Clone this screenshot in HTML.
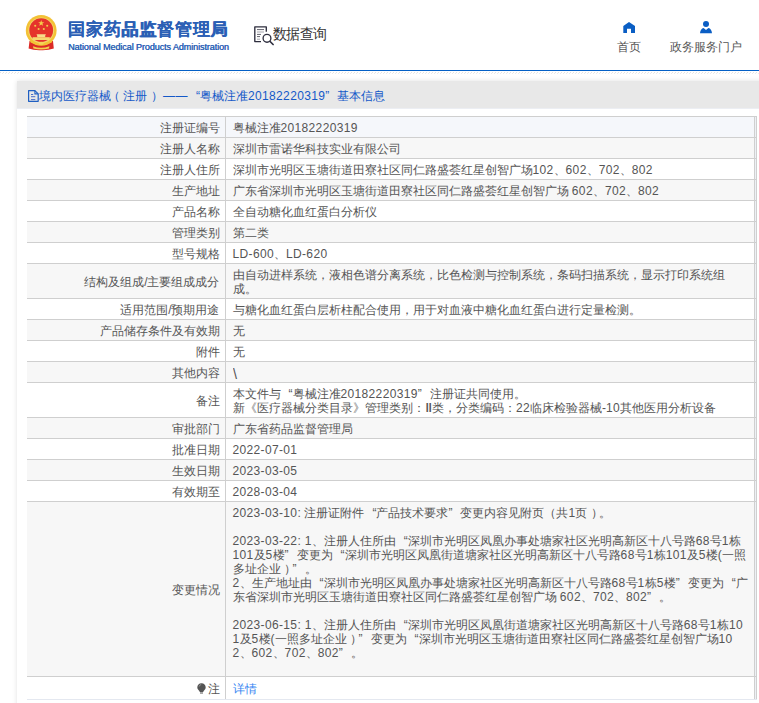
<!DOCTYPE html>
<html><head><meta charset="utf-8">
<style>
*{margin:0;padding:0;box-sizing:border-box}
html,body{width:759px;height:703px;overflow:hidden;background:#fff;font-family:"Liberation Sans",sans-serif;font-size:12px;color:#333}
.abs{position:absolute}
#emblem{left:25px;top:15px;width:34px;height:37px}
#title{left:68px;top:18px;font-size:17.4px;letter-spacing:0.8px;font-weight:bold;text-shadow:0.45px 0.2px 0 #2b5fb5;color:#2b5fb5;white-space:nowrap;line-height:22px}
#entitle{left:68px;top:41.5px;font-size:9px;letter-spacing:-0.07px;text-shadow:0.4px 0 0 #2b5fb5;color:#2b5fb5;white-space:nowrap;line-height:11px}
#qicon{left:250px;top:22px;width:28px;height:26px}
#qtext{left:273px;top:23.5px;transform:scale(1.02,1.1);transform-origin:0 0;font-size:14px;letter-spacing:-1px;color:#333;white-space:nowrap;line-height:18px}
#home{left:623px;top:21px;width:12px;height:12px}
#hometext{left:617px;top:40px;color:#555;font-size:12px;line-height:15px;white-space:nowrap}
#user{left:700px;top:20px;width:12px;height:14px}
#usertext{left:670px;top:40px;color:#555;font-size:12px;line-height:15px;white-space:nowrap}
#bline{left:0;top:70px;width:759px;height:1px;background:#0460c6}

#box{left:17px;top:81px;width:760px;height:640px;background:#fff;box-shadow:0 0 5px rgba(0,0,0,.12)}
#bar{left:17px;top:81px;width:760px;height:27px;background:#e8e8e8;border-bottom:1px solid #eceef3;box-sizing:content-box}
#h3{margin:0 0 0 4px;letter-spacing:0.5px}
#bartext{left:28px;top:88.5px;padding-left:11px;color:#1459c8;font-size:12px;line-height:15px;white-space:nowrap}
table{position:absolute;left:27px;top:116px;border-collapse:collapse;table-layout:fixed}
td{border-bottom:1px solid #cfcfcf;padding:4px 6px 2px;line-height:14px;vertical-align:middle;white-space:nowrap;color:#555}
td.l{width:198px;text-align:right;border-right:1px solid #cfcfcf;padding-right:5px}
td.r{width:529px;border-right:1px solid #cfcfcf;padding-left:7px}
td.g{width:2px;padding:0;border-right:1px solid #cfcfcf;background:#eef0f5}
tr:first-child td{border-top:1px solid #cfcfcf}
tr.w td.l, tr.w td.r{background:#fff}
tr.k td.l, tr.k td.r{background:#f7f7f7}
tr.b td.l, tr.b td.r{background:#f5f7fb}
tr.h1 td{height:21px}
b.n{font-weight:normal;letter-spacing:0.35px}
i.pr{font-style:normal;position:relative;left:3.5px}
i.rn{font-style:normal;display:inline-block;width:7.5px;text-align:center;transform:scaleX(1.25)}
i.pl{font-style:normal;position:relative;left:-3.5px}
i.ql,i.qr{font-style:normal;display:inline-block;width:12px}
i.ql{text-align:right}
i.qr{text-align:left}
tr.last td{border-bottom-color:#e4e8f0}
</style></head><body>
<div class="abs" id="emblem">
<svg width="34" height="37" viewBox="0 0 34 37">
<path d="M4.5 26 L3.6 33.5 Q9 35.5 16 35.2 Q23 35.5 28.8 33.5 L28 26 Z" fill="#dc2a26"/>
<circle cx="16.2" cy="15.4" r="15.4" fill="#f3c236"/>
<circle cx="16.2" cy="15.4" r="12.9" fill="#f2d66a"/>
<circle cx="16.2" cy="15.2" r="11.9" fill="#e5332b"/>
<path d="M16.2 5l0.75 2.2h2.3l-1.85 1.4 0.7 2.2-1.9-1.35-1.9 1.35 0.7-2.2-1.85-1.4h2.3z" fill="#f6d04a"/>
<circle cx="10.2" cy="10.7" r="1.05" fill="#f0cc4a"/><circle cx="22.2" cy="10.7" r="1.05" fill="#f0cc4a"/>
<circle cx="13.6" cy="14" r="1.05" fill="#f0cc4a"/><circle cx="18.8" cy="14" r="1.05" fill="#f0cc4a"/>
<path d="M11.5 19.2h9.4l-0.6 1.2h-8.2z M12.2 20.4h8v1.8h-8z" fill="#f7dc8a"/>
<path d="M7.6 22.2h17.2v2.8H7.6z" fill="#f6d670"/>
<path d="M5 25.4 Q16 31 27.4 25.4 L26.8 27.6 Q16 32.6 5.6 27.6Z" fill="#f3c236"/>
<path d="M13.5 27.6 Q16 25.8 18.9 27.6 L18.3 29.3 Q16 30.3 14.1 29.3Z" fill="#f4d45a"/>
<path d="M8 31.2 Q16 34.2 24.4 31.2 L24 33.4 Q16 35.6 8.4 33.4Z" fill="#f2d050"/>
</svg>
</div>
<div class="abs" id="title">国家药品监督管理局</div>
<div class="abs" id="entitle">National Medical Products Administration</div>
<div class="abs" id="qicon">
<svg width="28" height="26" viewBox="0 0 28 26"><path d="M11 19.6H4.8V4.9H16.3V9.8" fill="none" stroke="#2e2e3e" stroke-width="1.35" stroke-linejoin="round"/><path d="M7 7.6h7M7 12.4h4M7 14.6h3" stroke="#3a3a48" stroke-width="0.8"/><path d="M7 10h7M7 17.2h3" stroke="#9a9aa4" stroke-width="0.9"/><circle cx="17" cy="16.3" r="3.9" fill="none" stroke="#2e2e3e" stroke-width="1.35"/><path d="M20.1 19.5l3 3" stroke="#2e2e3e" stroke-width="1.7" stroke-linecap="round"/></svg>
</div>
<div class="abs" id="qtext">数据查询</div>
<div class="abs" id="home"><svg width="12" height="12" viewBox="0 0 12 12"><path d="M6 0.9L0.3 4.9V11.9H4V7.8H8V11.9H12V4.9z" fill="#0a5ec4"/></svg></div>
<div class="abs" id="hometext">首页</div>
<div class="abs" id="user"><svg width="12" height="14" viewBox="0 0 12 14"><circle cx="6" cy="4.1" r="3" fill="#0a5ec4"/><path d="M0 13.3Q0.4 8.6 3.6 7.9L6 9.9L8.4 7.9Q11.6 8.6 12 13.3z" fill="#0a5ec4"/></svg></div>
<div class="abs" id="usertext">政务服务门户</div>
<div class="abs" id="bline"></div>
<svg class="abs" id="dots" width="759" height="3" style="left:0;top:72px"><defs><pattern id="dp" width="3" height="2" patternUnits="userSpaceOnUse"><rect x="0" y="0" width="1" height="1" fill="#e3e3e3"/><rect x="2" y="1" width="1" height="1" fill="#ebebeb"/></pattern></defs><rect width="759" height="2" fill="url(#dp)"/></svg>
<div class="abs" id="box"></div>
<div class="abs" id="bar"></div>
<div class="abs" id="bartext"><svg width="11" height="12" viewBox="0 0 11 12" style="position:absolute;left:0;top:1.2px"><path d="M0.6 0.6H6.9L10.2 3.9V11.3H0.6Z" fill="none" stroke="#1f5fc2" stroke-width="1.2" stroke-linejoin="round"/><path d="M6.9 0.6V3.9H10.2" fill="none" stroke="#1f5fc2" stroke-width="1.1"/><path d="M3 4.5h2.2M3 6.7h4.3M3 9.6h4.3" stroke="#4a6fc8" stroke-width="1"/></svg><span id="h1">境内医疗器械</span><span id="h2"><i class="pl">（</i>注册<i class="pr">）</i></span><span id="h3">——</span><i class="ql">“</i><span id="h4">粤械注准<b class="n">20182220319</b></span><i class="qr">”</i><span id="h5">基本信息</span></div>
<table>
<tr class="b h1"><td class="l">注册证编号</td><td class="r">粤械注准<b class="n">20182220319</b></td><td class="g"></td></tr>
<tr class="k h1"><td class="l">注册人名称</td><td class="r">深圳市雷诺华科技实业有限公司</td><td class="g"></td></tr>
<tr class="w h1"><td class="l">注册人住所</td><td class="r">深圳市光明区玉塘街道田寮社区同仁路盛荟红星创智广场<b class="n">102</b>、<b class="n">602</b>、<b class="n">702</b>、<b class="n">802</b></td><td class="g"></td></tr>
<tr class="k h1"><td class="l">生产地址</td><td class="r">广东省深圳市光明区玉塘街道田寮社区同仁路盛荟红星创智广场 <b class="n">602</b>、<b class="n">702</b>、<b class="n">802</b></td><td class="g"></td></tr>
<tr class="w h1"><td class="l">产品名称</td><td class="r">全自动糖化血红蛋白分析仪</td><td class="g"></td></tr>
<tr class="k h1"><td class="l">管理类别</td><td class="r">第二类</td><td class="g"></td></tr>
<tr class="w h1"><td class="l">型号规格</td><td class="r"><b class="n">LD-600</b>、<b class="n">LD-620</b></td><td class="g"></td></tr>
<tr class="k"><td class="l">结构及组成/主要组成成分</td><td class="r">由自动进样系统，液相色谱分离系统，比色检测与控制系统，条码扫描系统，显示打印系统组<br>成。</td><td class="g"></td></tr>
<tr class="w h1"><td class="l">适用范围/预期用途</td><td class="r">与糖化血红蛋白层析柱配合使用，用于对血液中糖化血红蛋白进行定量检测。</td><td class="g"></td></tr>
<tr class="k h1"><td class="l">产品储存条件及有效期</td><td class="r">无</td><td class="g"></td></tr>
<tr class="w h1"><td class="l">附件</td><td class="r">无</td><td class="g"></td></tr>
<tr class="k h1"><td class="l">其他内容</td><td class="r"><span style="display:inline-block;transform:scale(1.2);transform-origin:0 30%;position:relative;top:0.5px">\</span></td><td class="g"></td></tr>
<tr class="w"><td class="l">备注</td><td class="r">本文件与<i class="ql">“</i>粤械注准<b class="n">20182220319</b><i class="qr">”</i>注册证共同使用。<br>新《医疗器械分类目录》管理类别：<i class="rn">Ⅱ</i>类，分类编码：<b class="n">22</b>临床检验器械-<b class="n">10</b>其他医用分析设备</td><td class="g"></td></tr>
<tr class="k h1"><td class="l">审批部门</td><td class="r">广东省药品监督管理局</td><td class="g"></td></tr>
<tr class="w h1"><td class="l">批准日期</td><td class="r"><b class="n">2022-07-01</b></td><td class="g"></td></tr>
<tr class="k h1"><td class="l">生效日期</td><td class="r"><b class="n">2023-03-05</b></td><td class="g"></td></tr>
<tr class="w h1"><td class="l">有效期至</td><td class="r"><b class="n">2028-03-04</b></td><td class="g"></td></tr>
<tr class="k"><td class="l">变更情况</td><td class="r"><b class="n">2023-03-10:</b> 注册证附件<i class="ql">“</i>产品技术要求<i class="qr">”</i>变更内容见附页（共<b class="n">1</b>页<i class="pr">）</i>。<br><br><b class="n">2023-03-22: 1</b>、注册人住所由<i class="ql">“</i>深圳市光明区凤凰办事处塘家社区光明高新区十八号路<b class="n">68</b>号<b class="n">1</b>栋<br><b class="n">101</b>及<b class="n">5</b>楼<i class="qr">”</i>变更为<i class="ql">“</i>深圳市光明区凤凰街道塘家社区光明高新区十八号路<b class="n">68</b>号<b class="n">1</b>栋<b class="n">101</b>及<b class="n">5</b>楼(一照<br>多址企业<i class="pr">）</i><i class="qr">”</i>。<br><b class="n">2</b>、生产地址由<i class="ql">“</i>深圳市光明区凤凰办事处塘家社区光明高新区十八号路<b class="n">68</b>号<b class="n">1</b>栋<b class="n">5</b>楼<i class="qr">”</i>变更为<i class="ql">“</i>广<br>东省深圳市光明区玉塘街道田寮社区同仁路盛荟红星创智广场 <b class="n">602</b>、<b class="n">702</b>、<b class="n">802</b><i class="qr">”</i>。<br><br><b class="n">2023-06-15: 1</b>、注册人住所由<i class="ql">“</i>深圳市光明区凤凰街道塘家社区光明高新区十八号路<b class="n">68</b>号<b class="n">1</b>栋<b class="n">10</b><br><b class="n">1</b>及<b class="n">5</b>楼(一照多址企业<i class="pr">）</i><i class="qr">”</i>变更为<i class="ql">“</i>深圳市光明区玉塘街道田寮社区同仁路盛荟红星创智广场<b class="n">10</b><br><b class="n">2</b>、<b class="n">602</b>、<b class="n">702</b>、<b class="n">802</b><i class="qr">”</i>。<br><br></td><td class="g"></td></tr>
<tr class="w last"><td class="l" style="height:23px"><svg width="9" height="11" viewBox="0 0 9 11" style="vertical-align:-1px;margin-right:2px"><path d="M4.5 0.3C2 0.3 0.3 2.1 0.3 4.3c0 1.7 1 2.6 1.8 3.4 0.5 0.5 0.6 0.9 0.7 1.2h3.4c0.1-0.3 0.2-0.7 0.7-1.2 0.8-0.8 1.8-1.7 1.8-3.4C8.7 2.1 7 0.3 4.5 0.3z" fill="#545454"/><path d="M2.2 3.5Q2.6 1.8 4.2 1.4" stroke="#aaa" stroke-width="0.7" fill="none"/><path d="M3 10h3" stroke="#545454" stroke-width="1"/></svg>注</td><td class="r"><span style="color:#3585f2">详情</span></td><td class="g"></td></tr>
</table>
</body></html>
